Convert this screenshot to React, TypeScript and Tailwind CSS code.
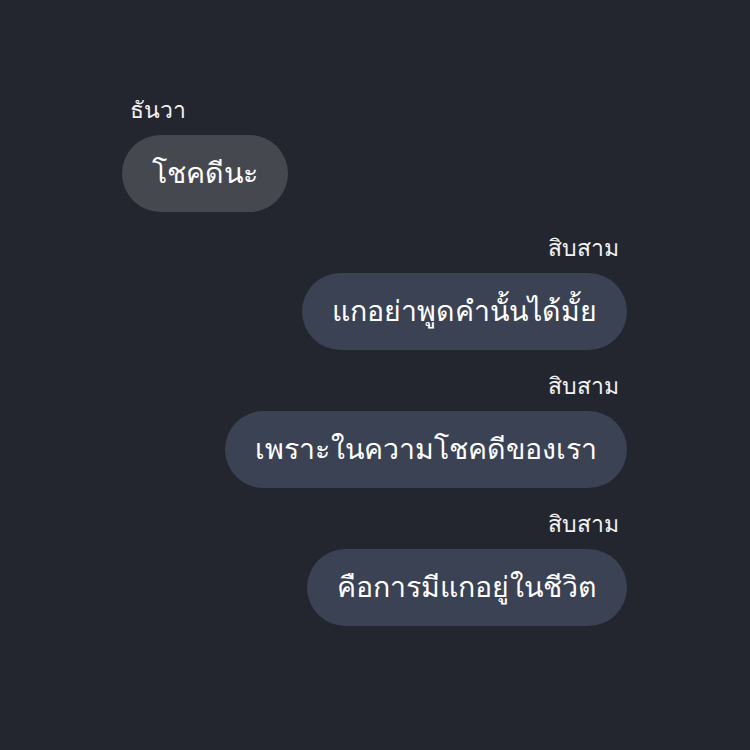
const messages = [
  { from: 'ธันวา', text: 'โชคดีนะ', mine: false },
  { from: 'สิบสาม', text: 'แกอย่าพูดคำนั้นได้มั้ย', mine: true },
  { from: 'สิบสาม', text: 'เพราะ ในความโชคดีของเรา', mine: true },
  { from: 'สิบสาม', text: 'คือการมีแกอยู่ ในชีวิต', mine: true },
]

export default function App() {
  return (
    <div
      className="flex h-[750px] w-[750px] flex-col gap-[24px] bg-[#23262e] pl-[122px] pr-[123px] pt-[98px]"
      style={{ fontFamily: '"Liberation Sans", sans-serif' }}
    >
      {messages.map((m, i) => (
        <div key={i} className={`flex flex-col ${m.mine ? 'items-end' : 'items-start'}`}>
          <div className="mb-[13px] px-[8px] text-[23px] leading-[24px] text-[#f2f2f2]">{m.from}</div>
          <div
            className={`flex h-[77px] items-center rounded-full px-[30px] text-[28.5px] text-white [word-spacing:-7px] ${
              m.mine ? 'bg-[#3a4254]' : 'bg-[#46484f]'
            }`}
          >
            {m.text}
          </div>
        </div>
      ))}
    </div>
  )
}
